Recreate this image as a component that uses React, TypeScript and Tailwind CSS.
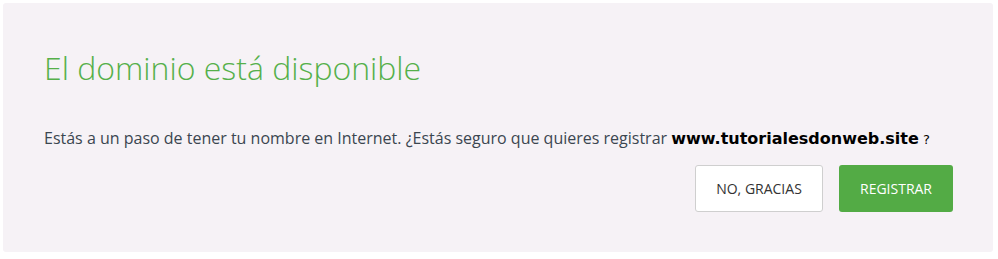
import React from 'react';

export default function App() {
    return (
        <div className="w-[998px] h-[259px] bg-white pt-[3px] pl-[3px]" style={{ fontFamily: '"Open Sans", sans-serif' }}>
            <div className="w-[990px] h-[249px] bg-[#f6f2f6] rounded-[3px] pl-[41px] pr-[40px] pt-[44px]">
                <h1 className="text-[32px] leading-[42px] font-light text-[#55b04a]">El dominio está disponible</h1>
                <p className="mt-[37px] h-[24px] text-[16px] leading-[24px] text-[#3b4650]">
                    Estás a un paso de tener tu nombre en Internet. ¿Estás seguro que quieres registrar{' '}
                    <span className="font-bold text-[16px] leading-[24px] text-black" style={{ fontFamily: '"DejaVu Sans", sans-serif' }}>www.tutorialesdonweb.site</span>{' '}
                    <span className="text-[13px] leading-[24px] text-black" style={{ fontFamily: '"DejaVu Sans", sans-serif' }}>?</span>
                </p>
                <div className="mt-[15px] flex justify-end gap-[16px]">
                    <button className="w-[128px] h-[47px] bg-white border border-[#cfcfcf] rounded-[3px] text-[14px] text-[#333]">NO, GRACIAS</button>
                    <button className="w-[114px] h-[47px] bg-[#53ab45] rounded-[3px] text-[14px] text-white">REGISTRAR</button>
                </div>
            </div>
        </div>
    );
}
